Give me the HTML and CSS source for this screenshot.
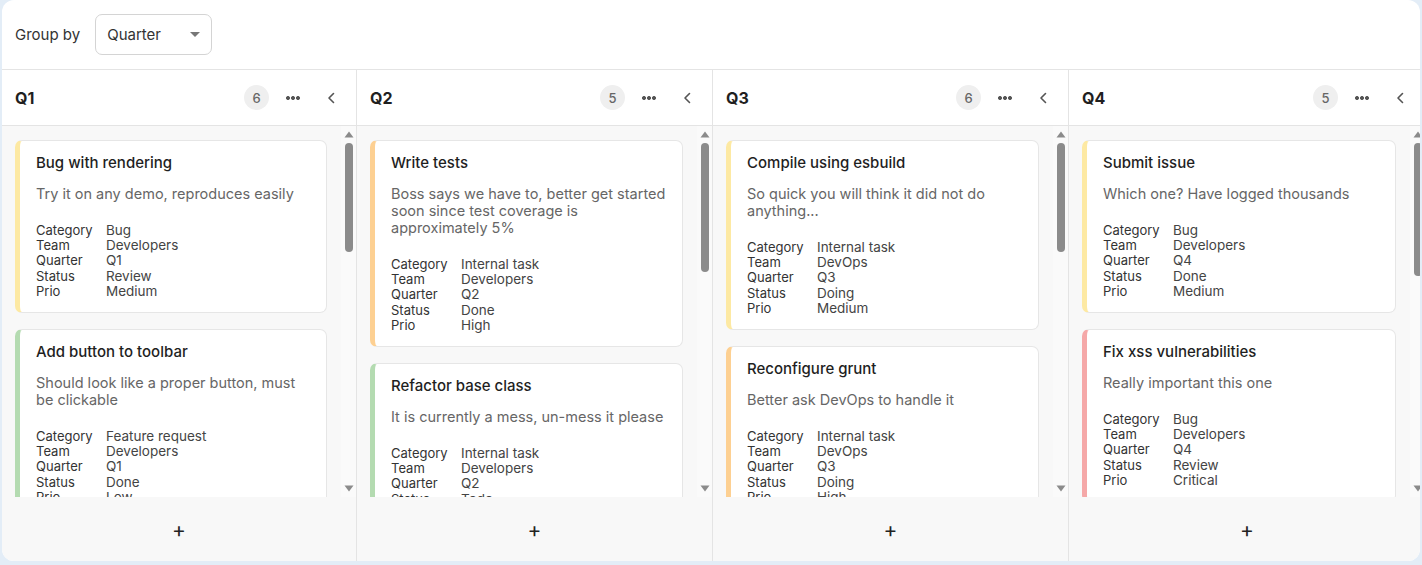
FILE: index.html
```html
<!DOCTYPE html>
<html lang="en">
<head>
    <meta charset="UTF-8">
    <meta name="viewport" content="width=device-width, initial-scale=1.0">
    <title>TaskBoard - Group by</title>
    <link rel="stylesheet" href="styles.css">
</head>
<body>
    <div class="panel">
        <div class="toolbar">
            <label class="toolbar-label" for="groupBy">Group by</label>
            <div class="select" id="groupBy">
                <span>Quarter</span>
                <span class="caret"></span>
            </div>
        </div>
        <div class="board" id="board">
            <!-- columns rendered from data below -->
        </div>
    </div>

    <script>
        const tasks = [
            { name: 'Bug with rendering', description: 'Try it on any demo, reproduces easily', category: 'Bug', team: 'Developers', quarter: 'Q1', status: 'Review', prio: 'Medium' },
            { name: 'Add button to toolbar', description: 'Should look like a proper button, must be clickable', category: 'Feature request', team: 'Developers', quarter: 'Q1', status: 'Done', prio: 'Low' },
            { name: 'Update dependencies', description: 'Some of them are getting quite old', category: 'Internal task', team: 'Developers', quarter: 'Q1', status: 'Todo', prio: 'Low' },
            { name: 'Improve docs', description: 'Nobody reads them anyway', category: 'Internal task', team: 'Developers', quarter: 'Q1', status: 'Doing', prio: 'Medium' },
            { name: 'Fix memory leak', description: 'Grows slowly when switching views', category: 'Bug', team: 'Developers', quarter: 'Q1', status: 'Todo', prio: 'High' },
            { name: 'Keyboard navigation', description: 'Arrow keys should move between cards', category: 'Feature request', team: 'Developers', quarter: 'Q1', status: 'Todo', prio: 'Medium' },

            { name: 'Write tests', description: 'Boss says we have to, better get started soon since test coverage is approximately 5%', category: 'Internal task', team: 'Developers', quarter: 'Q2', status: 'Done', prio: 'High' },
            { name: 'Refactor base class', description: 'It is currently a mess, un-mess it please', category: 'Internal task', team: 'Developers', quarter: 'Q2', status: 'Todo', prio: 'Low' },
            { name: 'Dark theme', description: 'Everybody wants one these days', category: 'Feature request', team: 'UX', quarter: 'Q2', status: 'Doing', prio: 'Medium' },
            { name: 'Move to new server', description: 'The old one is making strange noises', category: 'Internal task', team: 'DevOps', quarter: 'Q2', status: 'Todo', prio: 'High' },
            { name: 'Crash on export', description: 'Only happens on Fridays', category: 'Bug', team: 'Developers', quarter: 'Q2', status: 'Review', prio: 'Critical' },

            { name: 'Compile using esbuild', description: 'So quick you will think it did not do anything...', category: 'Internal task', team: 'DevOps', quarter: 'Q3', status: 'Doing', prio: 'Medium' },
            { name: 'Reconfigure grunt', description: 'Better ask DevOps to handle it', category: 'Internal task', team: 'DevOps', quarter: 'Q3', status: 'Doing', prio: 'High' },
            { name: 'Add drag and drop', description: 'Between columns and within them', category: 'Feature request', team: 'Developers', quarter: 'Q3', status: 'Todo', prio: 'Medium' },
            { name: 'Setup CI', description: 'Run the tests on every push', category: 'Internal task', team: 'DevOps', quarter: 'Q3', status: 'Todo', prio: 'Low' },
            { name: 'Wrong date format', description: 'Shows month before day everywhere', category: 'Bug', team: 'Developers', quarter: 'Q3', status: 'Review', prio: 'Low' },
            { name: 'Redesign header', description: 'Make it look less like 2005', category: 'Feature request', team: 'UX', quarter: 'Q3', status: 'Todo', prio: 'Medium' },

            { name: 'Submit issue', description: 'Which one? Have logged thousands', category: 'Bug', team: 'Developers', quarter: 'Q4', status: 'Done', prio: 'Medium' },
            { name: 'Fix xss vulnerabilities', description: 'Really important this one', category: 'Bug', team: 'Developers', quarter: 'Q4', status: 'Review', prio: 'Critical' },
            { name: 'Release 2.0', description: 'With all the shiny new features', category: 'Internal task', team: 'Developers', quarter: 'Q4', status: 'Todo', prio: 'High' },
            { name: 'Write changelog', description: 'Someone has to do it', category: 'Internal task', team: 'Developers', quarter: 'Q4', status: 'Todo', prio: 'Low' },
            { name: 'Backup database', description: 'Before the release', category: 'Internal task', team: 'DevOps', quarter: 'Q4', status: 'Todo', prio: 'Medium' }
        ];

        const quarters = ['Q1', 'Q2', 'Q3', 'Q4'];
        const board = document.getElementById('board');

        function cardHtml(task) {
            return `
                <div class="card prio-${task.prio.toLowerCase()}">
                    <h3 class="card-title">${task.name}</h3>
                    <p class="card-text">${task.description}</p>
                    <dl class="card-fields">
                        <dt>Category</dt><dd>${task.category}</dd>
                        <dt>Team</dt><dd>${task.team}</dd>
                        <dt>Quarter</dt><dd>${task.quarter}</dd>
                        <dt>Status</dt><dd>${task.status}</dd>
                        <dt>Prio</dt><dd>${task.prio}</dd>
                    </dl>
                </div>
            `;
        }

        quarters.forEach(q => {
            const list = tasks.filter(t => t.quarter === q);
            const col = document.createElement('section');
            col.classList.add('column');
            col.innerHTML = `
                <header class="column-header">
                    <h2 class="column-title">${q}</h2>
                    <span class="count">${list.length}</span>
                    <button class="icon-btn" title="More">
                        <svg width="14" height="4" viewBox="0 0 14 4"><circle cx="2" cy="2" r="1.6"/><circle cx="7" cy="2" r="1.6"/><circle cx="12" cy="2" r="1.6"/></svg>
                    </button>
                    <button class="icon-btn" title="Collapse">
                        <svg width="8" height="12" viewBox="0 0 8 12"><path d="M6.5 1.5 2 6l4.5 4.5" fill="none" stroke-width="1.6" stroke-linecap="round" stroke-linejoin="round"/></svg>
                    </button>
                </header>
                <div class="column-body">
                    <div class="card-list">${list.map(cardHtml).join('')}</div>
                    <div class="scrollbar">
                        <svg class="arrow" width="10" height="7" viewBox="0 0 10 7"><path d="M5 .5 9.5 6.5H.5z"/></svg>
                        <div class="track"><div class="thumb"></div></div>
                        <svg class="arrow" width="10" height="7" viewBox="0 0 10 7"><path d="M5 6.5 9.5 .5H.5z"/></svg>
                    </div>
                </div>
                <div class="column-footer"><button class="add-btn">+</button></div>
            `;
            board.appendChild(col);

            // thumb size follows how much of the list is visible
            const cardList = col.querySelector('.card-list');
            const track = col.querySelector('.track');
            const ratio = cardList.clientHeight / cardList.scrollHeight;
            col.querySelector('.thumb').style.height = Math.round(track.clientHeight * ratio) + 'px';
        });
    </script>
</body>
</html>
```

FILE: styles.css
```css
:root {
    --page-bg: #e3edf7;
    --border: #e4e4e4;
    --body-bg: #f8f8f8;
    --text: #1f1f1f;
    --text-muted: #666;
    --prio-low: #b4dbb1;
    --prio-medium: #fde9a3;
    --prio-high: #fdd092;
    --prio-critical: #f5a8a8;
}

* {
    margin: 0;
    padding: 0;
    box-sizing: border-box;
    font-family: "Inter", "Open Sans", sans-serif;
}

body {
    background-color: var(--page-bg);
    color: var(--text);
    height: 565px;
    padding: 0 2px;
    overflow: hidden;
}

.panel {
    height: 561px;
    background-color: #fff;
    border-radius: 12px;
    overflow: hidden;
    display: flex;
    flex-direction: column;
}

.toolbar {
    display: flex;
    align-items: center;
    gap: 15px;
    padding: 14px 13px;
    border-bottom: 1px solid var(--border);
}

.toolbar-label {
    font-size: 15px;
    color: #333;
}

.select {
    width: 117px;
    height: 41px;
    border: 1px solid #d4d4d4;
    border-radius: 7px;
    display: flex;
    align-items: center;
    justify-content: space-between;
    padding: 0 11px;
    font-size: 15px;
    color: #333;
}

.caret {
    width: 0;
    height: 0;
    border-left: 5px solid transparent;
    border-right: 5px solid transparent;
    border-top: 5px solid #777;
}

.board {
    flex: 1;
    display: flex;
    min-height: 0;
}

.column {
    flex: 0 0 356px;
    display: flex;
    flex-direction: column;
    border-right: 1px solid var(--border);
    min-width: 0;
}

.column:first-child {
    flex-basis: 355px;
}

.column:last-child {
    border-right: none;
}

.column-header {
    height: 56px;
    display: flex;
    align-items: center;
    gap: 10px;
    padding: 0 11px 0 13px;
    border-bottom: 1px solid var(--border);
}

.column-title {
    font-size: 16px;
    font-weight: 700;
    flex: 1;
}

.count {
    width: 25px;
    height: 25px;
    border-radius: 50%;
    background-color: #efefef;
    color: #666;
    font-size: 13px;
    font-weight: 500;
    display: flex;
    align-items: center;
    justify-content: center;
}

.icon-btn {
    width: 28px;
    height: 28px;
    border: none;
    background: none;
    display: flex;
    align-items: center;
    justify-content: center;
    cursor: pointer;
    fill: #555;
    stroke: #555;
}

.column-body {
    flex: 1;
    display: flex;
    min-height: 0;
    background-color: var(--body-bg);
}

.card-list {
    flex: 1;
    overflow: hidden;
    padding: 14px 14px 0 13px;
    display: flex;
    flex-direction: column;
    gap: 16px;
}

.scrollbar {
    width: 15px;
    background-color: #fafafa;
    display: flex;
    flex-direction: column;
    align-items: center;
    padding: 1px 0;
    fill: #8b8b8b;
}

.arrow {
    margin: 4px 0;
    flex-shrink: 0;
}

.track {
    flex: 1;
    width: 100%;
    display: flex;
    justify-content: center;
    padding-top: 1px;
}

.thumb {
    width: 8px;
    border-radius: 4px;
    background-color: #8b8b8b;
}

.card {
    flex-shrink: 0;
    background-color: #fff;
    border: 1px solid #e6e6e6;
    border-left: 5px solid var(--prio-medium);
    border-radius: 7px;
    padding: 13px 14px 13px 16px;
}

.prio-low { border-left-color: var(--prio-low); }
.prio-medium { border-left-color: var(--prio-medium); }
.prio-high { border-left-color: var(--prio-high); }
.prio-critical { border-left-color: var(--prio-critical); }

.card-title {
    font-size: 15px;
    font-weight: 500;
    line-height: 17px;
    color: var(--text);
}

.card-text {
    font-size: 14.5px;
    line-height: 17px;
    color: var(--text-muted);
    margin-top: 14px;
}

.card-fields {
    display: grid;
    grid-template-columns: 70px 1fr;
    font-size: 13px;
    line-height: 15.2px;
    margin-top: 21px;
    color: #333;
}

.card-fields dd {
    font-size: 13.5px;
    color: #444;
}

.column-footer {
    height: 64px;
    background-color: var(--body-bg);
    display: flex;
    align-items: center;
    justify-content: center;
}

.add-btn {
    border: none;
    background: none;
    font-size: 21px;
    font-weight: 400;
    color: #222;
    cursor: pointer;
}
```
